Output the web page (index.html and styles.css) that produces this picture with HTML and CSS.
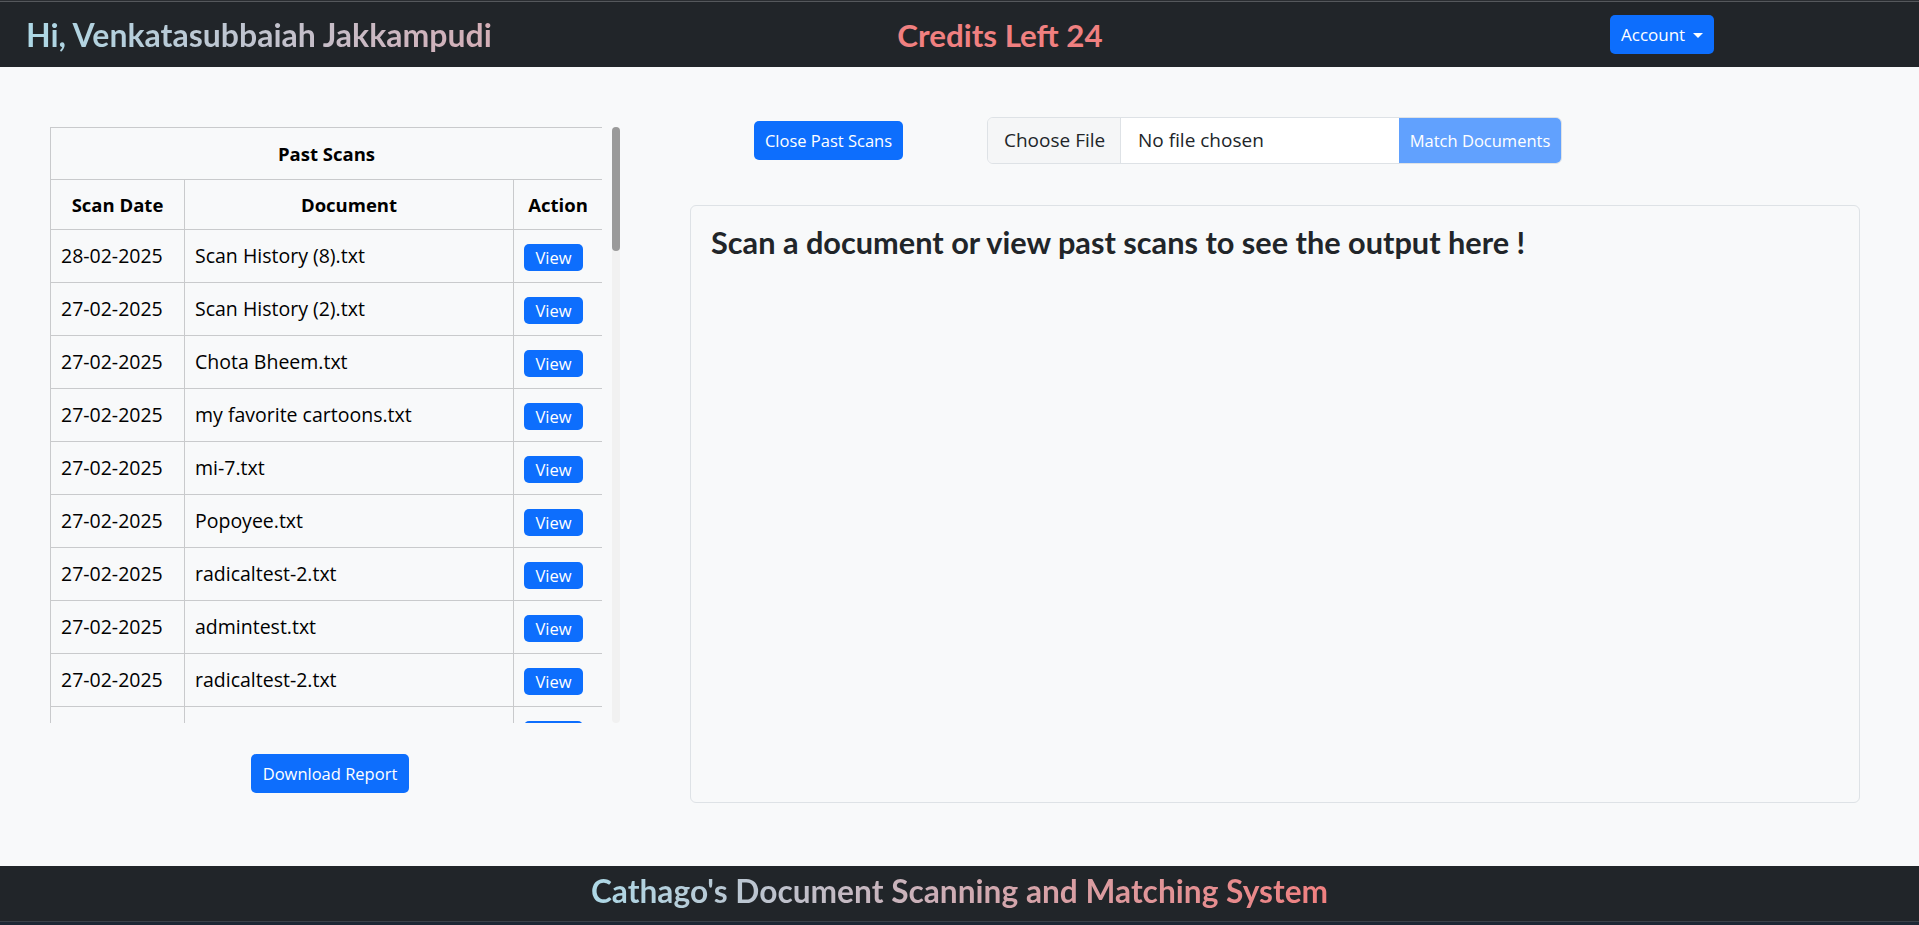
FILE: index.html
```html
<!DOCTYPE html>
<html lang="en">
<head>
<meta charset="utf-8">
<title>Cathago Document Scanner</title>
<link rel="stylesheet" href="styles.css">
</head>
<body>
<nav class="topbar">
  <div class="topbar-left"><h2 class="greeting">Hi, Venkatasubbaiah Jakkampudi</h2></div>
  <div class="topbar-center"><h2 class="credits">Credits Left 24</h2></div>
  <div class="topbar-right"><button class="btn btn-primary account-btn">Account<span class="caret"></span></button></div>
</nav>

<main class="layout">
  <section class="history">
    <div class="scans-frame">
      <div class="scans-scroll">
        <table class="scans">
          <colgroup><col class="c-date"><col class="c-doc"><col class="c-act"></colgroup>
          <thead>
            <tr class="title-row"><th colspan="3">Past Scans</th></tr>
            <tr class="head-row"><th>Scan Date</th><th>Document</th><th>Action</th></tr>
          </thead>
          <tbody>
            <tr><td>28-02-2025</td><td>Scan History (8).txt</td><td class="act"><button class="view-btn">View</button></td></tr>
            <tr><td>27-02-2025</td><td>Scan History (2).txt</td><td class="act"><button class="view-btn">View</button></td></tr>
            <tr><td>27-02-2025</td><td>Chota Bheem.txt</td><td class="act"><button class="view-btn">View</button></td></tr>
            <tr><td>27-02-2025</td><td>my favorite cartoons.txt</td><td class="act"><button class="view-btn">View</button></td></tr>
            <tr><td>27-02-2025</td><td>mi-7.txt</td><td class="act"><button class="view-btn">View</button></td></tr>
            <tr><td>27-02-2025</td><td>Popoyee.txt</td><td class="act"><button class="view-btn">View</button></td></tr>
            <tr><td>27-02-2025</td><td>radicaltest-2.txt</td><td class="act"><button class="view-btn">View</button></td></tr>
            <tr><td>27-02-2025</td><td>admintest.txt</td><td class="act"><button class="view-btn">View</button></td></tr>
            <tr><td>27-02-2025</td><td>radicaltest-2.txt</td><td class="act"><button class="view-btn">View</button></td></tr>
            <tr><td></td><td></td><td class="act"><button class="view-btn">View</button></td></tr>
          </tbody>
        </table>
      </div>
      <div class="scroll-rail"><div class="scroll-thumb"></div></div>
    </div>
    <button class="btn btn-primary download-btn">Download Report</button>
  </section>

  <section class="workspace">
    <div class="controls">
      <button class="btn btn-primary close-btn">Close Past Scans</button>
      <div class="file-group">
        <span class="file-choose">Choose File</span>
        <span class="file-name">No file chosen</span>
        <button class="match-btn" disabled>Match Documents</button>
      </div>
    </div>
    <div class="output-card">
      <h3 class="output-msg">Scan a document or view past scans to see the output here !</h3>
    </div>
  </section>
</main>

<footer class="footer">
  <h3 class="footer-title">Cathago's Document Scanning and Matching System</h3>
</footer>
</body>
</html>
```

FILE: styles.css
```css
* { box-sizing: border-box; }

html, body { margin: 0; padding: 0; }

body {
  font-family: "Open Sans", "Liberation Sans", sans-serif;
  background: #f8f9fa;
  color: #212529;
  min-height: 100vh;
  display: flex;
  flex-direction: column;
}

h2, h3 { margin: 0; font-family: "Lato", "Open Sans", sans-serif; font-weight: 700; }

.btn {
  font-family: inherit;
  border: 0;
  border-radius: 5px;
  cursor: pointer;
}

.btn-primary { background: #0d6efd; color: #fff; }

/* ---------- top bar ---------- */
.topbar {
  height: 67px;
  display: flex;
  align-items: center;
  background: linear-gradient(#2a2d31 0 1px, #55585c 1px 2px, #212529 2px);
  padding-top: 2px;
}

.topbar-left { width: 640px; padding-left: 26px; }
.topbar-center { width: 720px; text-align: center; }
.topbar-right { padding-left: 250px; }

.greeting {
  display: inline-block;
  font-size: 32px;
  line-height: 40px;
  background: linear-gradient(90deg, #add8e6, #d4aeb6);
  -webkit-background-clip: text;
  background-clip: text;
  color: transparent;
}

.credits {
  font-size: 31.3px;
  line-height: 40px;
  color: #f08080;
}

.account-btn {
  height: 39px;
  padding: 0 11px;
  font-size: 17px;
  display: inline-flex;
  align-items: center;
  gap: 8px;
}

.caret {
  width: 0;
  height: 0;
  border-left: 5px solid transparent;
  border-right: 5px solid transparent;
  border-top: 5px solid #fff;
  margin-top: 1px;
}

/* ---------- layout ---------- */
.layout {
  flex: 1;
  display: flex;
}

.history {
  width: 580px;
  margin-left: 40px;
  padding-top: 60px;
  display: flex;
  flex-direction: column;
  align-items: center;
}

.scans-frame {
  align-self: stretch;
  margin-left: 10px;
  height: 596px;
  display: flex;
}

.scans-scroll {
  width: 552px;
  height: 100%;
  overflow-y: auto;
  scrollbar-width: none;
}

.scroll-rail {
  width: 8px;
  margin-left: 10px;
  background: #f1f1f1;
  border-radius: 4px;
}

.scroll-thumb {
  height: 124px;
  background: #9a9a9a;
  border-radius: 4px;
}

.scans {
  width: 552px;
  table-layout: fixed;
  border-collapse: collapse;
  font-size: 19.5px;
  color: #000;
}

.c-date { width: 134px; }
.c-doc { width: 329px; }
.c-act { width: 89px; }

.scans th, .scans td {
  border: 1px solid #c9cacc;
  line-height: 28px;
  padding: 12px 10px;
  white-space: nowrap;
  overflow: hidden;
}

.scans th { font-weight: 700; text-align: center; font-size: 18.5px; }
.title-row th { padding: 12px 10px 11px; }
.head-row th { padding: 11px 10px 10px; }

.scans td.act { padding: 14px 10px 11px; }

.view-btn {
  display: block;
  font-family: inherit;
  font-size: 16.5px;
  height: 27px;
  line-height: 27px;
  padding: 0;
  width: 59px;
  border: 0;
  border-radius: 5px;
  background: #0d6efd;
  color: #fff;
}

.download-btn {
  margin-top: 31px;
  height: 39px;
  width: 158px;
  padding: 0;
  font-size: 16.5px;
}

/* ---------- workspace ---------- */
.workspace {
  margin-left: 70px;
  width: 1170px;
  padding-top: 50px;
}

.controls {
  display: flex;
  align-items: center;
  height: 47px;
  padding-left: 64px;
  gap: 84px;
}

.close-btn {
  height: 39px;
  width: 149px;
  padding: 0;
  font-size: 16.5px;
}

.file-group {
  display: flex;
  width: 575px;
  height: 47px;
  border: 1px solid #dee2e6;
  border-radius: 6px;
  overflow: hidden;
  font-size: 19px;
}

.file-choose {
  width: 133px;
  padding-left: 16px;
  line-height: 45px;
  background: #f5f6f7;
  border-right: 1px solid #dee2e6;
  color: #212529;
}

.file-name {
  width: 278px;
  padding-left: 17px;
  line-height: 45px;
  background: #fff;
}

.match-btn {
  flex: 1;
  border: 0;
  background: #61a1fe;
  color: #fff;
  font-family: inherit;
  font-size: 16.5px;
  padding: 0;
}

.output-card {
  margin-top: 41px;
  height: 598px;
  border: 1px solid #dee2e6;
  border-radius: 6px;
  padding: 18px 20px;
}

.output-msg {
  font-size: 30.7px;
  line-height: 38px;
  color: #212529;
}

/* ---------- footer ---------- */
.footer {
  height: 59px;
  background: linear-gradient(#212529 0 55px, #3b4149 55px 56px, #1d2734 56px);
  text-align: center;
}

.footer-title {
  display: inline-block;
  font-size: 31.7px;
  line-height: 51px;
  background: linear-gradient(90deg, #add8e6, #f08080);
  -webkit-background-clip: text;
  background-clip: text;
  color: transparent;
}
```
